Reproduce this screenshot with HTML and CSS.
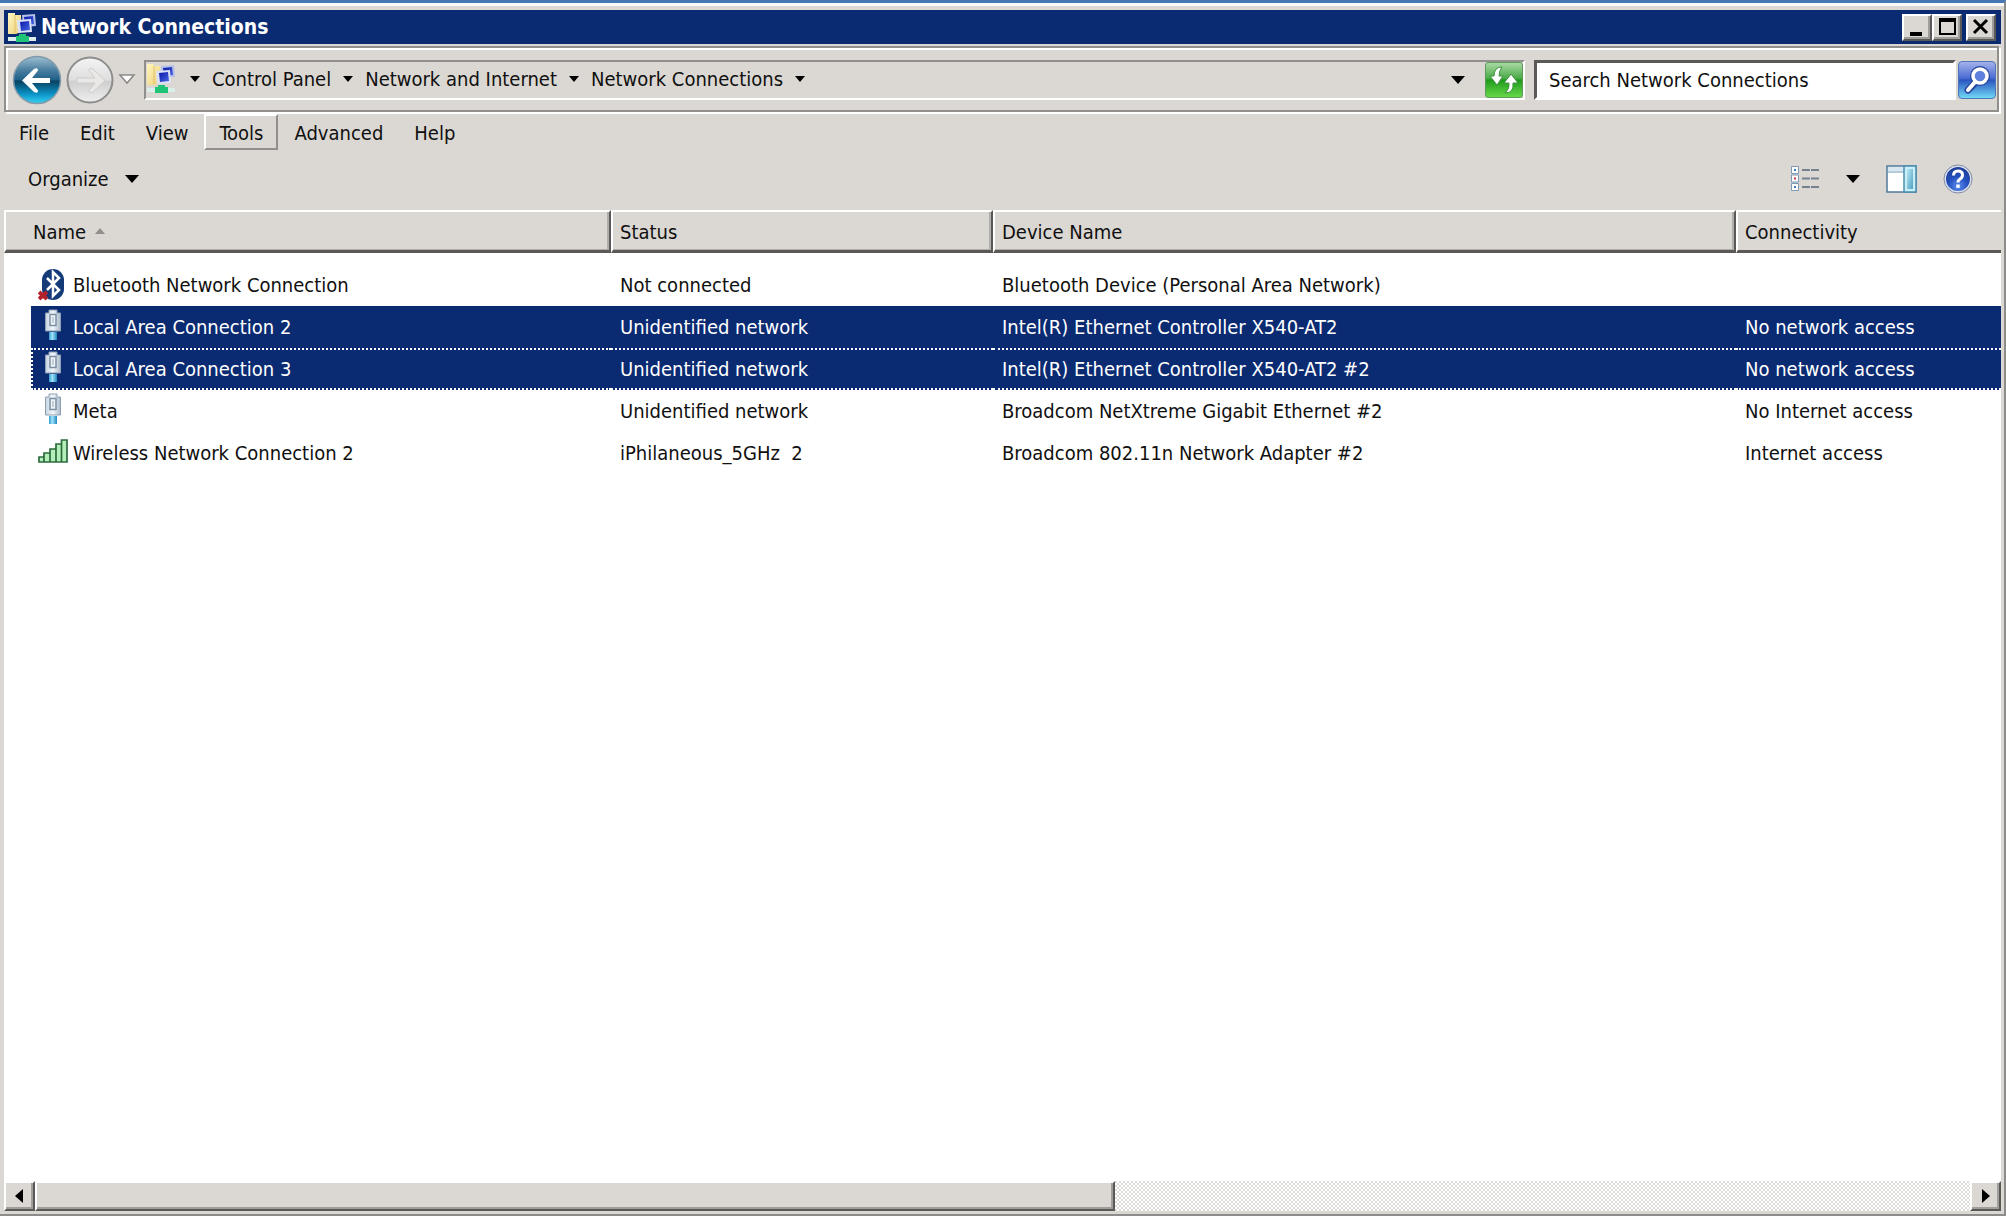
FILE: index.html
```html
<!DOCTYPE html>
<html lang="en">
<head>
<meta charset="utf-8">
<title>Network Connections</title>
<link rel="stylesheet" href="styles.css">
</head>
<body>
<svg class="defs" width="0" height="0" aria-hidden="true">
  <defs>
    <linearGradient id="folder" x1="0" y1="0" x2="1" y2="1"><stop offset="0" stop-color="#fff6c0"/><stop offset="1" stop-color="#ecd07a"/></linearGradient>
    <linearGradient id="screen" x1="0" y1="0" x2="1" y2="1"><stop offset="0" stop-color="#0a17a8"/><stop offset="1" stop-color="#4a68e0"/></linearGradient>
    <linearGradient id="backFill" x1="0" y1="0" x2="0" y2="1"><stop offset="0" stop-color="#9fc0d2"/><stop offset=".3" stop-color="#477d9f"/><stop offset=".5" stop-color="#1f5f88"/><stop offset=".52" stop-color="#08405f"/><stop offset=".8" stop-color="#0c93c6"/><stop offset="1" stop-color="#35d3f5"/></linearGradient>
    <linearGradient id="fwdFill" x1="0" y1="0" x2="0" y2="1"><stop offset="0" stop-color="#f4f4f4"/><stop offset=".5" stop-color="#dedede"/><stop offset=".53" stop-color="#cfcfcf"/><stop offset="1" stop-color="#efefef"/></linearGradient>
    <linearGradient id="plug" x1="0" y1="0" x2="1" y2="0"><stop offset="0" stop-color="#c6d4e2"/><stop offset=".5" stop-color="#f1f6fa"/><stop offset="1" stop-color="#a9b9cb"/></linearGradient>
    <linearGradient id="cable" x1="0" y1="0" x2="1" y2="0"><stop offset="0" stop-color="#2c9bd0"/><stop offset=".4" stop-color="#a4e4fb"/><stop offset="1" stop-color="#1f86bd"/></linearGradient>
    <linearGradient id="pane" x1="0" y1="0" x2="1" y2="1"><stop offset="0" stop-color="#b9e6f2"/><stop offset="1" stop-color="#4fa3c4"/></linearGradient>
    <radialGradient id="helpFill" cx=".5" cy=".8" r=".8"><stop offset="0" stop-color="#5f8ff0"/><stop offset=".5" stop-color="#2450bd"/><stop offset="1" stop-color="#1d3d96"/></radialGradient>
    <symbol id="net" viewBox="0 0 30 30">
      <path d="M1 1h7v2h6v17l-5 2H1z" fill="url(#folder)"/>
      <path d="M8 3v18" stroke="#e0c068"/>
      <path d="M15 3l13-1 1 12-13 1z" fill="#b4c0ea"/>
      <path d="M17 5l9-1 1 8-9 1z" fill="url(#screen)"/>
      <path d="M10 8l14-1 1 13-14 1z" fill="#dbe2f8"/>
      <path d="M13 10l9-1 1 9-9 1z" fill="url(#screen)"/>
      <path d="M1 25h28v4H1z" fill="#dceee9"/>
      <path d="M12 22h7v2h3v6H9v-6h3z" fill="#1fc477"/>
    </symbol>
    <symbol id="adapter" viewBox="0 0 18 32">
      <path d="M5 1h8v3h3.500v18h-15V4H5z" fill="url(#plug)" stroke="#8fa0b4"/>
      <path d="M6 5.500h6v11H6z" fill="#eef3f7" stroke="#7c8fa3" stroke-width="1.500"/>
      <path d="M8 8v6h2V8" fill="#c5cfda"/>
      <path d="M5 23h8v8H5z" fill="url(#cable)"/>
    </symbol>
  </defs>
</svg>

<header class="titlebar">
  <svg class="icon-net" aria-hidden="true"><use href="#net"/></svg>
  <h1>Network Connections</h1>
  <div class="captions">
    <button type="button" aria-label="Minimize"><svg width="22" height="20"><path d="M4 15h12v4H4z"/></svg></button>
    <button type="button" aria-label="Maximize"><svg width="22" height="20"><path d="M3 1h17v17H3zM5 5v11h13V5z" fill-rule="evenodd"/></svg></button>
    <button type="button" aria-label="Close" class="close"><svg width="22" height="20"><path d="M4 3l13 13M17 3L4 16" stroke="#000" stroke-width="3"/></svg></button>
  </div>
</header>

<div class="rebar">
  <div class="travel">
    <button type="button" aria-label="Back"><svg width="50" height="50" viewBox="0 0 50 50"><circle cx="25" cy="25" r="23.500" fill="url(#backFill)" stroke="#7f9aaa" stroke-width="1.500"/><path d="M10 25.500L22 14q4-2 4 1.500L20 23h18v5H20l6 7.500q0 3.500-4 1.500z" fill="#fff"/></svg></button>
    <button type="button" aria-label="Forward"><svg width="50" height="50" viewBox="0 0 50 50"><circle cx="25" cy="25" r="22.500" fill="url(#fwdFill)" stroke="#8d8d8d" stroke-width="2"/><path d="M40 25.500L28 14q-4-2-4 1.500L30 23H12v5h18l-6 7.500q0 3.500 4 1.500z" fill="#e9e8e6" stroke="#cfcdcb"/></svg></button>
    <button type="button" aria-label="Recent pages"><svg width="18" height="14" viewBox="0 0 18 14"><path d="M2 2h14l-7 8z" fill="#fff" stroke="#8b8987" stroke-width="1.500"/></svg></button>
  </div>
  <div class="address">
    <svg class="icon-net" aria-hidden="true"><use href="#net"/></svg>
    <nav class="crumbs" aria-label="Address">
      <i class="tri"></i>
      <a href="#">Control Panel</a><i class="tri"></i>
      <a href="#">Network and Internet</a><i class="tri"></i>
      <a href="#">Network Connections</a><i class="tri"></i>
    </nav>
    <button type="button" class="history" aria-label="Previous locations"><i class="tri big"></i></button>
    <button type="button" class="refresh" aria-label="Refresh"><svg width="36" height="34" viewBox="0 0 36 34"><path d="M16 4Q8 4 8 13H4l7 9 6-9h-4q0-5 3-9z" fill="#fff" stroke="#3f8f3d"/><path d="M19 30q9 0 8-10h5l-7-9-7 9h5q1 6-4 10z" fill="#fff" stroke="#3f8f3d"/></svg></button>
  </div>
  <form class="search">
    <input type="text" aria-label="Search" value="Search Network Connections">
    <button type="button" aria-label="Search"><svg width="34" height="34" viewBox="0 0 34 34"><path d="M16 19L8 27" stroke="#28459c" stroke-width="7" stroke-linecap="round"/><circle cx="20" cy="13" r="7" fill="none" stroke="#28459c" stroke-width="6"/><path d="M15 19L8 27" stroke="#fff" stroke-width="4" stroke-linecap="round"/><circle cx="20" cy="13" r="7" fill="#5f80dc" stroke="#fff" stroke-width="3.500"/></svg></button>
  </form>
</div>

<nav class="menubar">
  <button type="button">File</button>
  <button type="button">Edit</button>
  <button type="button">View</button>
  <button type="button" class="hot">Tools</button>
  <button type="button">Advanced</button>
  <button type="button">Help</button>
</nav>

<div class="toolbar">
  <button type="button" class="organize">Organize <i class="tri big"></i></button>
  <div class="tools">
    <button type="button" aria-label="View"><svg width="30" height="28" viewBox="0 0 30 28"><g fill="#fff" stroke="#7f99b5"><path d="M1.500 1.500h7v7h-7zM1.500 10h7v7h-7zM1.500 18.500h7v7h-7z"/></g><path d="M4 4h2v2H4zM4 21h2v2H4z" fill="#3a7cc0"/><path d="M4 12.500h2v2H4z" fill="#c0304a"/><path d="M12 5h8M21 5h8M12 13.500h8M21 13.500h8M12 22h8M21 22h8" stroke="#76818f" stroke-width="2"/></svg></button>
    <button type="button" aria-label="More view options"><i class="tri big"></i></button>
    <button type="button" aria-label="Preview pane"><svg width="31" height="28" viewBox="0 0 31 28"><path d="M1 1h29v26H1z" fill="#fff" stroke="#51799b" stroke-width="1.500"/><path d="M2 2h16v4H2z" fill="#d7e8f3"/><path d="M1 7h17" stroke="#6d95b5"/><path d="M18 1h12v26H18z" fill="#c9eef7" stroke="#4b8db0" stroke-width="1.500"/><path d="M21 4h6v20h-6z" fill="url(#pane)"/></svg></button>
    <button type="button" aria-label="Help"><svg width="30" height="30" viewBox="0 0 30 30"><circle cx="15" cy="15" r="14" fill="#dfe3ee" stroke="#7e8aa5"/><circle cx="15" cy="15" r="12" fill="url(#helpFill)"/><path d="M10.500 11.500q0-4.500 4.500-4.500t4.500 4q0 2.500-2.500 4-2 1.200-2 3.500" fill="none" stroke="#fff" stroke-width="3"/><path d="M13.300 20.500h3.400v3.400h-3.400z" fill="#fff"/></svg></button>
  </div>
</div>

<main class="list">
  <table>
    <colgroup><col class="c-name"><col class="c-status"><col class="c-device"><col></colgroup>
    <thead>
      <tr><th scope="col">Name <i class="sort"></i></th><th scope="col">Status</th><th scope="col">Device Name</th><th scope="col">Connectivity</th></tr>
    </thead>
    <tbody>
      <tr><td><div><svg width="30" height="34" viewBox="0 0 30 34"><rect x="4" y="1" width="22" height="31" rx="11" fill="#143a78"/><path d="M9 10l12 12-6 6V4l6 6-12 12" fill="none" stroke="#fff" stroke-width="2.500"/><path d="M1 24l8 7M9 24l-8 7" stroke="#b3212b" stroke-width="4"/></svg>Bluetooth Network Connection</div></td><td>Not connected</td><td>Bluetooth Device (Personal Area Network)</td><td></td></tr>
      <tr class="selected"><td><div><svg width="30" height="36"><use href="#adapter" x="6" width="18" height="32"/></svg>Local Area Connection 2</div></td><td>Unidentified network</td><td>Intel(R) Ethernet Controller X540-AT2</td><td>No network access</td></tr>
      <tr class="selected focused"><td><div><svg width="30" height="36"><use href="#adapter" x="6" width="18" height="32"/></svg>Local Area Connection 3</div></td><td>Unidentified network</td><td>Intel(R) Ethernet Controller X540-AT2 #2</td><td>No network access</td></tr>
      <tr><td><div><svg width="30" height="36"><use href="#adapter" x="6" width="18" height="32"/></svg>Meta</div></td><td>Unidentified network</td><td>Broadcom NetXtreme Gigabit Ethernet #2</td><td>No Internet access</td></tr>
      <tr><td><div><svg width="30" height="30" viewBox="0 0 30 30"><path d="M1 19h5v5H1zM6 15h6v9H6zM12 11h6v13h-6zM18 6h5.500v18H18zM23.500 2H29v22h-5.500z" fill="#b4eeb8" stroke="#2b6b3c" stroke-width="1.700"/></svg>Wireless Network Connection 2</div></td><td class="keep">iPhilaneous_5GHz  2</td><td>Broadcom 802.11n Network Adapter #2</td><td>Internet access</td></tr>
    </tbody>
  </table>
</main>

<div class="scrollbar">
  <button type="button" aria-label="Scroll left"><svg width="12" height="16"><path d="M9 1v14L1 8z"/></svg></button>
  <div class="track"><div class="thumb"></div></div>
  <button type="button" aria-label="Scroll right"><svg width="12" height="16"><path d="M2 1v14l8-7z"/></svg></button>
</div>
</body>
</html>
```
FILE: styles.css
```css
:root {
  --face: #dbd8d3;
  --navy: #0a2a72;
  --dark: #5b5957;
  --shade: #918f8c;
  --blue: #4577b3;
}
* { box-sizing: border-box; }
html { height: 100%; }
body {
  margin: 0;
  min-height: 100vh;
  display: flex;
  flex-direction: column;
  padding: 7px 3px 3px 4px;
  border-top: 3px solid var(--blue);
  border-right: 2px solid #8e8c8a;
  border-bottom: 2px solid #8e8c8a;
  box-shadow: inset 0 3px #fbfaf9;
  background: var(--face);
  color: #101010;
  font: 20px/24px "DejaVu Sans Condensed", "DejaVu Sans", sans-serif;
}
button {
  margin: 0;
  padding: 0;
  border: 0;
  background: none;
  color: inherit;
  font: inherit;
}
svg { display: block; flex: none; }
.defs { position: absolute; }
a { color: inherit; text-decoration: none; }
.icon-net { width: 30px; height: 30px; }

.tri {
  display: block;
  flex: none;
  border: 5px solid transparent;
  border-top: 6px solid #000;
  border-bottom: 0;
}
.tri.big { border-width: 8px 7px 0; }

/* title bar */
.titlebar {
  display: flex;
  align-items: center;
  height: 34px;
  padding: 0 5px 0 3px;
  background: var(--navy);
  color: #fff;
}
h1 {
  flex: 1;
  margin: 0 0 0 4px;
  font-size: 21px;
  line-height: 30px;
}
.captions { display: flex; }
.captions button, .scrollbar button, .thumb {
  border: 2px solid;
  border-color: #fff var(--dark) var(--dark) #fff;
  background: var(--face);
  box-shadow: inset -2px -2px #a09e9a;
}
.captions button {
  display: flex;
  width: 30px;
  height: 27px;
  padding: 1px 2px;
}
.captions .close { margin-left: 4px; }

/* navigation row */
.rebar {
  display: flex;
  align-items: center;
  height: 66px;
  margin: 2px 2px 2px 0;
  padding: 2px 1px 0 6px;
  border: 2px solid var(--shade);
  box-shadow: inset 2px 2px #fff, 2px 2px #fff;
}
.travel { display: flex; align-items: center; width: 132px; gap: 3px; }
.address {
  flex: 1;
  display: flex;
  align-items: center;
  height: 40px;
  border: 2px solid;
  border-color: var(--shade) #fff #fff var(--shade);
}
.address .icon-net { margin-bottom: 4px; }
.crumbs {
  flex: 1;
  display: flex;
  align-items: center;
  gap: 12px;
  margin: 0 0 2px 14px;
}
.refresh {
  height: 36px;
  margin-left: 20px;
  border: 1px solid #5d9a5a;
  border-radius: 3px;
  background: linear-gradient(#a8d8a4, #4bab47 45%, #1d9a1b 50%, #66d84a);
}
.search { display: flex; align-items: center; margin-left: 9px; gap: 2px; }
.search input {
  width: 422px;
  height: 40px;
  padding: 0 0 0 12px;
  border: 3px solid;
  border-color: var(--dark) #fff #fff var(--dark);
  background: #fff;
  color: inherit;
  font: inherit;
}
.search button {
  width: 38px;
  height: 38px;
  padding: 1px;
  border: 1px solid #4f76b8;
  border-radius: 4px;
  background: linear-gradient(#a3b2ea, #4a6bd3 45%, #2b54c0 50%, #6fd8f6);
}

/* menus */
.menubar { display: flex; gap: 1px; height: 36px; }
.menubar button { padding: 2px 13px 0; border: 2px solid transparent; }
.menubar .hot {
  border-color: #fff var(--shade) var(--shade) #fff;
}
.toolbar {
  display: flex;
  align-items: center;
  justify-content: space-between;
  height: 60px;
  padding: 0 28px 2px 24px;
}
.organize { display: flex; align-items: center; gap: 16px; }
.tools { display: flex; align-items: center; gap: 26px; }

/* connection list */
.list { flex: 1; background: #fff; overflow: hidden; }
table {
  width: 100%;
  table-layout: fixed;
  border-spacing: 0;
}
.c-name { width: 607px; }
.c-status { width: 382px; }
.c-device { width: 743px; }
th {
  height: 43px;
  padding: 2px 0 0 7px;
  border: 2px solid;
  border-width: 2px 2px 3px;
  border-color: #fff var(--dark) var(--dark) #fff;
  background: var(--face);
  box-shadow: inset -2px -1px #b0aeaa;
  font-weight: normal;
  text-align: left;
}
th:first-child { padding-left: 27px; }
th:last-child { border-right: 0; box-shadow: none; }
.sort {
  display: inline-block;
  margin: 0 0 5px 3px;
  border: 5px solid transparent;
  border-bottom: 6px solid var(--shade);
  border-top: 0;
}
tbody::before { content: ""; display: table-row; height: 11px; }
td { height: 42px; padding: 0 0 0 9px; white-space: nowrap; }
.keep { white-space: pre; }
td:first-child { padding-left: 27px; }
td div {
  display: flex;
  align-items: center;
  gap: 5px;
  height: 42px;
  padding-left: 7px;
}
.selected { color: #fff; }
.selected td:not(:first-child), .selected div { background: var(--navy); }
.focused td:not(:first-child), .focused div {
  border: 0 dotted #fff;
  border-width: 2px 0;
}
.focused div { border-left-width: 2px; padding-left: 5px; }

/* horizontal scrollbar */
.scrollbar { display: flex; height: 30px; }
.scrollbar button {
  display: grid;
  place-items: center;
  width: 31px;
}
.track {
  flex: 1;
  background: repeating-conic-gradient(#fff 0 25%, #dedcd8 0 50%) 0 0 / 4px 4px;
}
.thumb { width: 55.8%; height: 100%; }
```
